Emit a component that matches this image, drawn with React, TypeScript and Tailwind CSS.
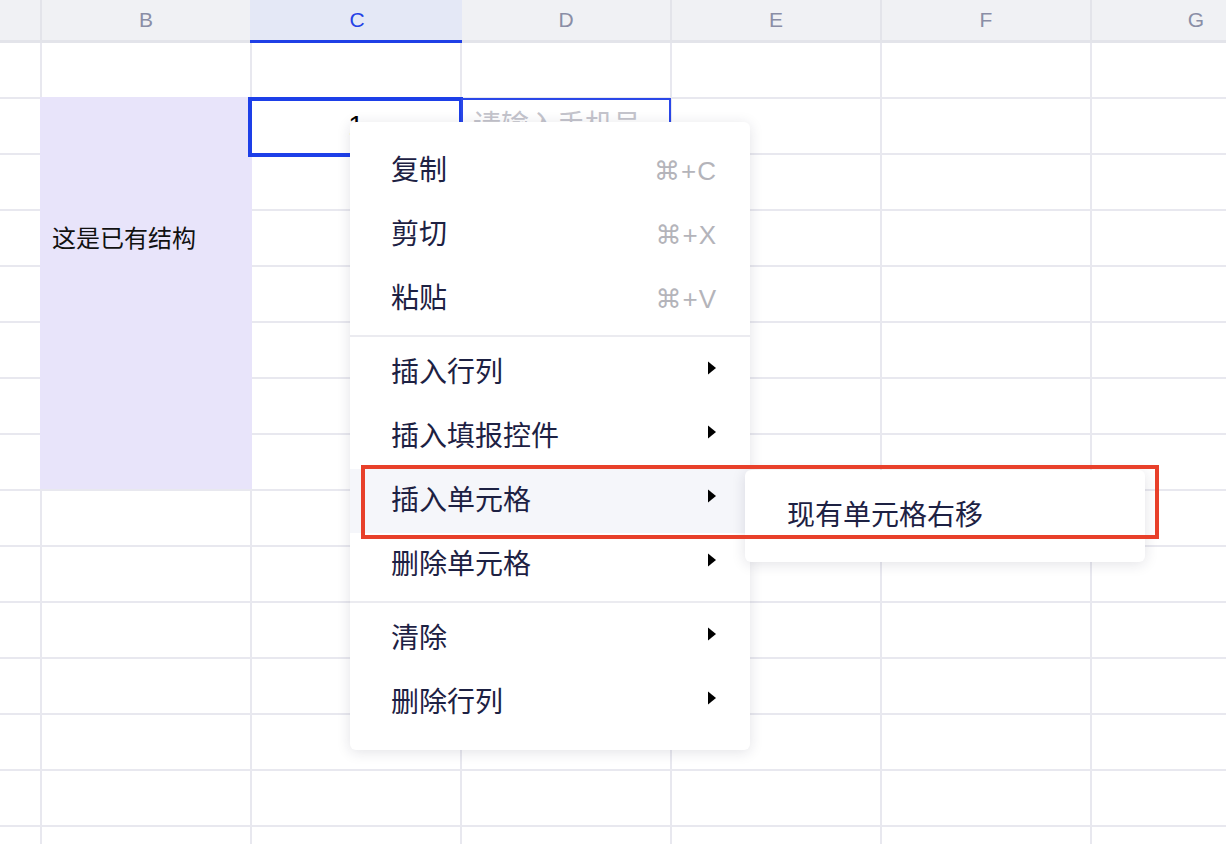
import React from 'react';

const cols = ['', 'B', 'C', 'D', 'E', 'F', 'G'];
const ROWS = 15;

const cjk = "font-['Liberation_Sans','Noto_Sans_CJK_SC',sans-serif]";

type Item = { label: string; shortcut?: string; sub?: boolean; active?: boolean };

const groups: Item[][] = [
  [
    { label: '复制', shortcut: '⌘+C' },
    { label: '剪切', shortcut: '⌘+X' },
    { label: '粘贴', shortcut: '⌘+V' },
  ],
  [
    { label: '插入行列', sub: true },
    { label: '插入填报控件', sub: true },
    { label: '插入单元格', sub: true, active: true },
    { label: '删除单元格', sub: true },
  ],
  [
    { label: '清除', sub: true },
    { label: '删除行列', sub: true },
  ],
];

const Arrow = () => (
  <svg width="10" height="14" viewBox="0 0 10 14" className="-mt-[10px]">
    <path d="M1 0.5 L9 7 L1 13.5 Z" fill="#000" />
  </svg>
);

function Cell({ r, c }: { r: number; c: number }) {
  const base = 'border-r-2 border-b-2 border-[#e8e8ef] bg-white';
  if (r === 1 && c === 2) {
    return (
      <div className={`${base} flex items-center justify-center text-[28px] text-black ${cjk}`}>1</div>
    );
  }
  if (r === 1 && c === 3) {
    return (
      <div className={`${base} flex items-center pl-[11px] text-[28px] text-[#c4c4cc] ${cjk}`}>
        请输入手机号
      </div>
    );
  }
  return <div className={base} />;
}

export default function App() {
  const body: React.ReactNode[] = [];
  for (let r = 0; r < ROWS; r++) {
    cols.forEach((_, c) => {
      if (c === 1 && r >= 1 && r <= 7) {
        if (r === 1) {
          body.push(
            <div
              key={`m-${r}-${c}`}
              className={`relative row-span-7 -ml-[2px] -mt-[2px] border-b-2 border-[#e8e8ef] bg-[#e8e4fa] pl-[12px] pt-[126px] text-[24px] leading-8 text-[#111] ${cjk}`}
            >
              这是已有结构
            </div>
          );
        }
        return;
      }
      body.push(<Cell key={`${r}-${c}`} r={r} c={c} />);
    });
  }

  return (
    <div className="relative h-[844px] w-[1226px] overflow-hidden bg-white">
      <div className="grid grid-cols-[42px_repeat(6,210px)] grid-rows-[43px_repeat(15,56px)]">
        {cols.map((l, i) =>
          l === 'C' ? (
            <div
              key={l}
              className="-ml-[2px] flex items-center justify-center border-b-[3px] border-b-[#1f3fe6] bg-[#e4e8f6] pl-[2px] font-['Liberation_Sans',sans-serif] text-[21px] text-[#2442e6]"
            >
              {l}
            </div>
          ) : (
            <div
              key={`h${i}`}
              className="flex items-center justify-center border-r-2 border-b-[3px] border-[#e3e4ea] bg-[#f0f1f4] font-['Liberation_Sans',sans-serif] text-[21px] text-[#8a8ea6]"
            >
              {l}
            </div>
          )
        )}
        {body}
      </div>

      {/* selection boxes */}
      <div className="absolute left-[248px] top-[97px] h-[60px] w-[215px] border-4 border-[#1d3fe8]" />
      <div className="absolute left-[461px] top-[98px] h-[59px] w-[210px] border-2 border-[#2a47e8]" />

      {/* context menu */}
      <div className={`absolute left-[350px] top-[122px] w-[400px] rounded-md bg-white pt-[17px] pb-[15px] shadow-[0_2px_14px_rgba(30,30,60,0.13)] ${cjk}`}>
        {groups.map((g, gi) => (
          <div key={gi}>
            {gi > 0 && <div className="my-1 h-[2px] bg-[#ebebf0]" />}
            {g.map((it) => (
              <div
                key={it.label}
                className={`flex h-16 items-center justify-between pl-[41px] pr-[33px] ${it.active ? 'bg-[#f5f6fa]' : ''}`}
              >
                <span className="text-[28px] text-[#1d2143]">{it.label}</span>
                {it.shortcut && (
                  <span className="font-['Liberation_Sans','DejaVu_Sans',sans-serif] text-[26px] tracking-[1px] text-[#b4b4ba]">
                    {it.shortcut}
                  </span>
                )}
                {it.sub && <Arrow />}
              </div>
            ))}
          </div>
        ))}
      </div>

      {/* submenu */}
      <div className={`absolute left-[745px] top-[470px] w-[400px] rounded-md bg-white py-[14px] shadow-[0_2px_14px_rgba(30,30,60,0.13)] ${cjk}`}>
        <div className="flex h-16 items-center pl-[42px] text-[28px] text-[#1d2143]">现有单元格右移</div>
      </div>

      {/* annotation */}
      <div className="absolute left-[361px] top-[465px] h-[74px] w-[798px] border-4 border-[#e8402a]" />
    </div>
  );
}
